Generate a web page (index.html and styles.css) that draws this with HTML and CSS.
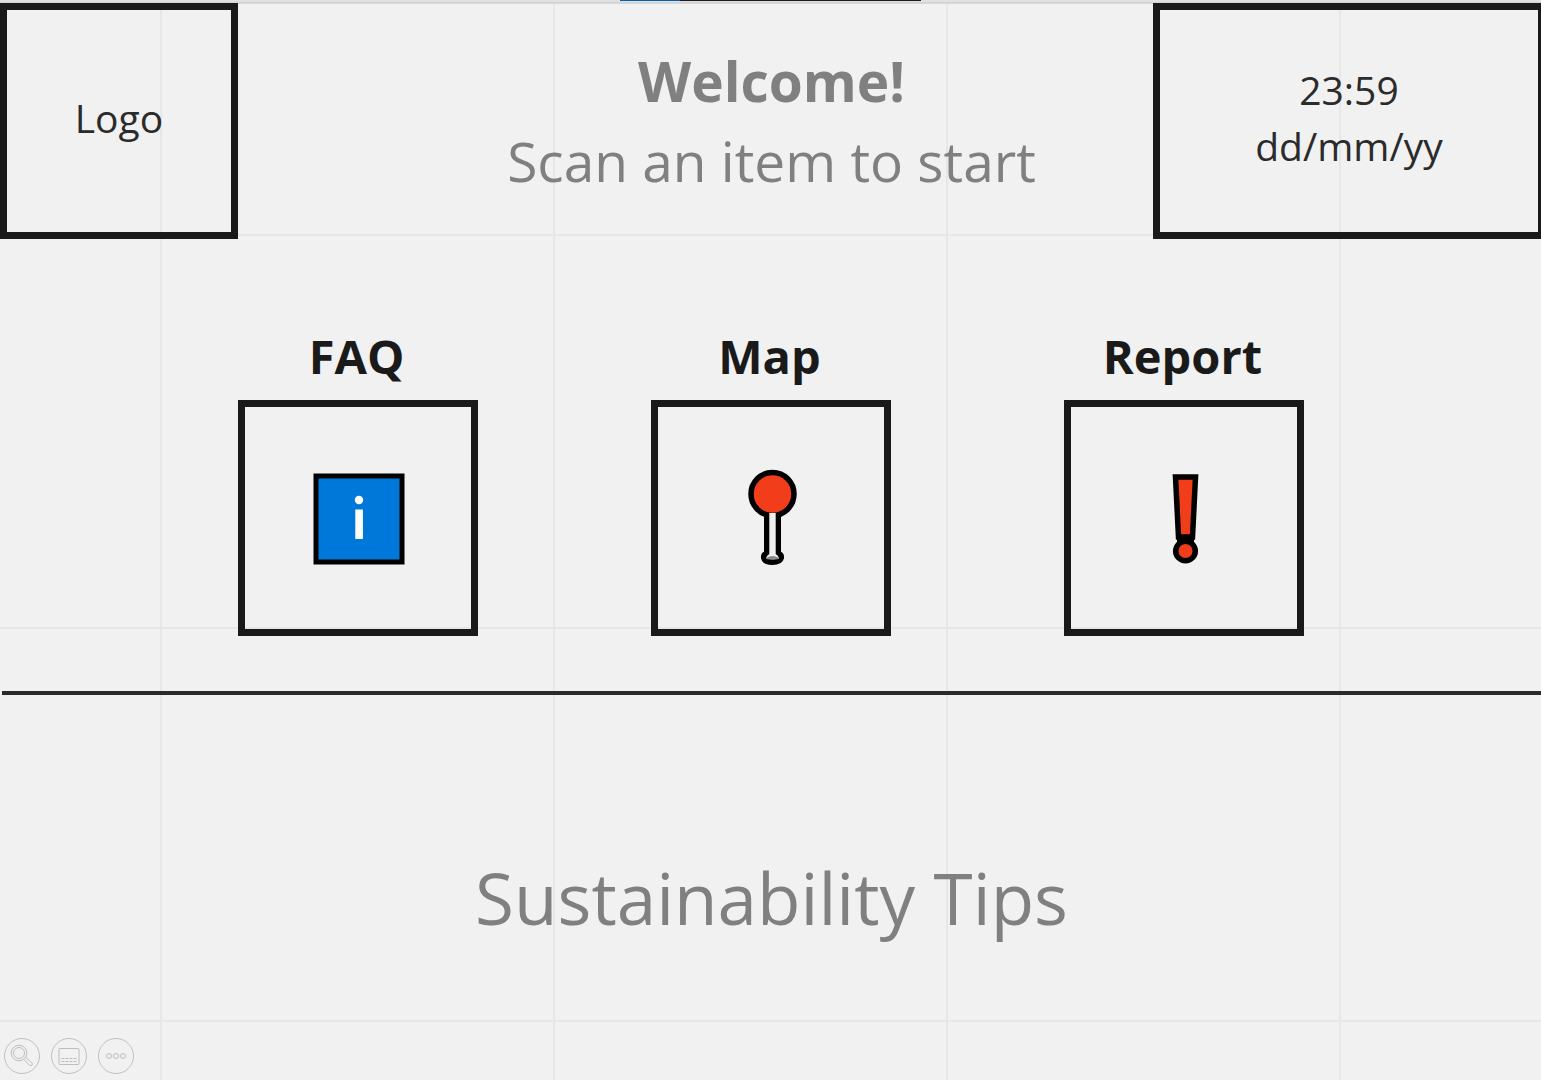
FILE: index.html
```html
<!DOCTYPE html>
<html lang="en">
<head>
<meta charset="utf-8">
<meta name="viewport" content="width=device-width, initial-scale=1">
<title>Welcome</title>
<link rel="stylesheet" href="styles.css">
</head>
<body>
<div class="strip"><span class="strip-active"></span><span class="strip-rest"></span></div>
<header class="header">
  <div class="box logo">Logo</div>
  <div class="welcome">
    <h1 class="welcome-title">Welcome!</h1>
    <p class="welcome-text">Scan an item to start</p>
  </div>
  <div class="box clock"><time>23:59</time><span>dd/mm/yy</span></div>
</header>
<main class="main">
  <nav class="tiles">
    <div class="tile">
      <h2 class="tile-label" id="faq">FAQ</h2>
      <button class="tile-button" type="button" aria-labelledby="faq">
        <svg width="100" height="100" viewBox="0 0 100 100" aria-hidden="true">
          <rect x="8" y="8" width="86" height="86" fill="#0078d9" stroke="#000" stroke-width="5"/>
          <circle cx="51" cy="32" r="4.2" fill="#fff"/>
          <rect x="47.3" y="41.5" width="7.6" height="29.5" fill="#fff"/>
        </svg>
      </button>
    </div>
    <div class="tile">
      <h2 class="tile-label" id="map">Map</h2>
      <button class="tile-button" type="button" aria-labelledby="map">
        <svg width="100" height="100" viewBox="0 0 100 100" aria-hidden="true">
          <path d="M45.500 42V85Q42 86.500 42.500 90Q43.500 94.500 51.500 94.500T60.500 90Q61 86.500 57.500 85V42Z" fill="#000" stroke="#000" stroke-width="5" stroke-linejoin="round"/>
          <circle cx="51.500" cy="26" r="21.500" fill="#f23d1b" stroke="#000" stroke-width="5.500"/>
          <path d="M48.300 45H54.700V86Q58 88 58 90.500Q51.500 92 45 90.500Q45 88 48.300 86Z" fill="#eee"/>
          <path d="M45 90Q51.500 86 58 90V91Q51.500 92.500 45 91Z" fill="#888"/>
        </svg>
      </button>
    </div>
    <div class="tile">
      <h2 class="tile-label" id="report">Report</h2>
      <button class="tile-button" type="button" aria-labelledby="report">
        <svg width="100" height="100" viewBox="0 0 100 100" aria-hidden="true">
          <path d="M43 68H60V78H43Z"/>
          <path d="M41.500 9H61.500L58.500 69H44.500Z" fill="#f23d1b" stroke="#000" stroke-width="5.500"/>
          <circle cx="51.500" cy="83" r="9.800" fill="#f23d1b" stroke="#000" stroke-width="5.500"/>
        </svg>
      </button>
    </div>
  </nav>
  <hr class="divider">
  <section class="tips"><h2 class="tips-title">Sustainability Tips</h2></section>
</main>
<footer class="toolbar">
  <button class="tool" type="button" aria-label="Zoom">
    <svg width="36" height="36" viewBox="0 0 36 36" fill="none" stroke="#bdbdbd" aria-hidden="true">
      <circle cx="15" cy="15" r="7.800"/><circle cx="15" cy="15" r="5.500"/>
      <path d="M19.800 21.300L25.500 27.200Q27 28.500 28 27.200T27.500 24.500L21.500 19.300"/>
    </svg>
  </button>
  <button class="tool" type="button" aria-label="Subtitles">
    <svg width="36" height="36" viewBox="0 0 36 36" fill="none" stroke="#bdbdbd" aria-hidden="true">
      <rect x="8" y="10.500" width="20" height="16" rx="1"/>
      <path d="M10.500 20.500H26M10.500 23.500H26" stroke-dasharray="3 1"/>
    </svg>
  </button>
  <button class="tool" type="button" aria-label="More options">
    <svg width="36" height="36" viewBox="0 0 36 36" fill="none" stroke="#bdbdbd" aria-hidden="true">
      <circle cx="11" cy="18" r="2.500"/><circle cx="18" cy="18" r="2.500"/><circle cx="25" cy="18" r="2.500"/>
    </svg>
  </button>
</footer>
</body>
</html>
```
FILE: styles.css
```css
* {
  box-sizing: border-box;
}

body {
  margin: 0;
  min-height: 100vh;
  display: flex;
  flex-direction: column;
  font-family: "Open Sans", sans-serif;
  color: #1a1a1a;
  background-color: #f1f1f1;
  background-image:
    linear-gradient(90deg, #e7e7e7 2px, transparent 2px),
    linear-gradient(#e7e7e7 2px, transparent 2px);
  background-size: 393px 393px;
  background-position: 160px 234px;
}

h1, h2, p {
  margin: 0;
}

/* Window edge above the board */
.strip {
  display: flex;
  justify-content: center;
  height: 3px;
  background: linear-gradient(#e0e0e0 2px, #d2d2d2 2px);
}

.strip-active,
.strip-rest {
  height: 1px;
  width: 60px;
  background: #0063b1;
}

.strip-rest {
  width: 241px;
  background: #1f1a1e;
}

.header {
  display: grid;
  grid-template-columns: 1fr auto 1fr;
  background: linear-gradient(#d8d8d8 1px, transparent 1px);
}

.box {
  display: flex;
  flex-direction: column;
  align-items: center;
  justify-content: center;
  height: 236px;
  padding-bottom: 6px;
  border: 7px solid #1a1a1a;
  font-size: 39px;
  line-height: 56px;
  color: #2b2b2b;
}

.logo {
  width: 238px;
}

.clock {
  justify-self: end;
  width: 388px;
  border-right-width: 3px;
}

.welcome {
  align-self: center;
  padding-left: 2px;
  text-align: center;
  font-size: 55px;
  line-height: 80px;
  color: #808080;
}

.welcome-title {
  font-size: 55px;
}

.main {
  flex: 1;
  display: flex;
  flex-direction: column;
}

.tiles {
  display: flex;
  justify-content: center;
  gap: 173px;
  padding: 85px 0 55px;
}

.tile {
  display: flex;
  flex-direction: column;
  gap: 12px;
  width: 240px;
}

.tile-label {
  padding-right: 2px;
  text-align: center;
  font-size: 47px;
  line-height: 64px;
}

.tile-button {
  display: flex;
  align-items: center;
  justify-content: center;
  height: 236px;
  padding: 0;
  border: 7px solid #1a1a1a;
  background: transparent;
  cursor: pointer;
}

.divider {
  width: auto;
  height: 4px;
  margin: 0 0 0 2px;
  border: 0;
  background: #2b2b2b;
}

.tips {
  flex: 1;
  display: flex;
  align-items: center;
  justify-content: center;
  padding: 62px 0 0 2px;
}

.tips-title {
  font-size: 71px;
  font-weight: 400;
  line-height: 96px;
  color: #808080;
}

.toolbar {
  display: flex;
  gap: 11px;
  padding: 0 4px 6px;
}

.tool {
  width: 36px;
  height: 36px;
  padding: 0;
  border: 1px solid #c0c0c0;
  border-radius: 50%;
  background: transparent;
  cursor: pointer;
}

.tool svg {
  display: block;
  margin: -1px;
}
```
